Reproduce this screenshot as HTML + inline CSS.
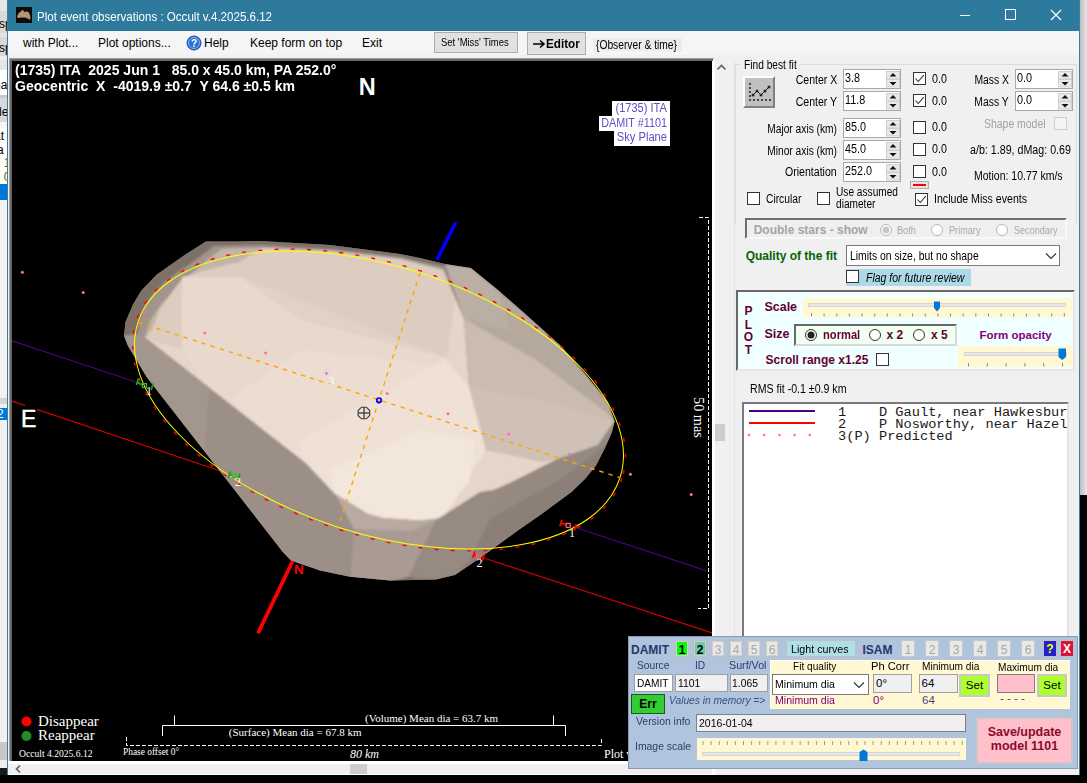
<!DOCTYPE html><html><head><meta charset="utf-8"><style>
html,body{margin:0;padding:0;width:1087px;height:783px;overflow:hidden;background:#000;position:relative;font-family:"Liberation Sans",sans-serif}
.t{position:absolute;white-space:pre;line-height:1}
.r{position:absolute;box-sizing:border-box}
svg{position:absolute;overflow:visible}
</style></head><body>
<div class="r" style="left:0px;top:0px;width:8px;height:775px;background:#f0f0f0;"></div>
<div class="r" style="left:0px;top:0px;width:7px;height:8px;background:#e8e8e8;"></div>
<div class="r" style="left:0px;top:8px;width:7px;height:3px;background:#dfe9df;"></div>
<div class="r" style="left:0px;top:11px;width:7px;height:22px;background:#d8d8d8;"></div>
<div class="r" style="left:0px;top:33px;width:7px;height:4px;background:#dfe9df;"></div>
<div class="r" style="left:0px;top:37px;width:7px;height:19px;background:#d8d8d8;"></div>
<div class="r" style="left:0px;top:56px;width:7px;height:4px;background:#eeeeee;"></div>
<div class="r" style="left:0px;top:60px;width:7px;height:10px;background:#e0eae0;"></div>
<div class="r" style="left:0px;top:70px;width:7px;height:25px;background:#ffffff;"></div>
<div class="r" style="left:0px;top:95px;width:7px;height:3px;background:#c8c8c8;"></div>
<div class="r" style="left:0px;top:98px;width:7px;height:24px;background:#d8d8d8;"></div>
<div class="r" style="left:0px;top:122px;width:7px;height:6px;background:#f4f4f4;"></div>
<div class="r" style="left:0px;top:128px;width:7px;height:56px;background:#ffffff;"></div>
<div class="r" style="left:0px;top:184px;width:7px;height:16px;background:#0078d7;"></div>
<div class="r" style="left:0px;top:200px;width:7px;height:198px;background:#f2f2f2;"></div>
<div class="r" style="left:0px;top:398px;width:7px;height:6px;background:#d4d4d4;"></div>
<div class="r" style="left:0px;top:404px;width:7px;height:4px;background:#f0f0f0;"></div>
<div class="r" style="left:0px;top:408px;width:7px;height:12px;background:#0078d7;"></div>
<div class="r" style="left:0px;top:420px;width:7px;height:322px;background:#f0f0f0;"></div>
<div class="r" style="left:0px;top:742px;width:7px;height:18px;background:#c8c8c8;"></div>
<div class="r" style="left:0px;top:760px;width:7px;height:8px;background:#efefef;"></div>
<div class="r" style="left:0px;top:768px;width:7px;height:7px;background:#1a1a1a;"></div>
<div style="position:absolute;left:0;top:0;width:7px;height:783px;overflow:hidden">
<div class="t" style="left:-1px;top:18px;font-size:12px;color:#000">sp</div>
<div class="t" style="left:-1px;top:42px;font-size:12px;color:#000">sp</div>
<div class="t" style="left:-6px;top:79px;font-size:12px;color:#000">na</div>
<div class="t" style="left:-5px;top:106px;font-size:12px;color:#000">de</div>
<div class="t" style="left:-6px;top:130px;font-size:12px;color:#000">at</div>
<div class="t" style="left:-3px;top:144px;font-size:12px;color:#000">a</div>
<div class="t" style="left:-3px;top:157px;font-size:12px;color:#7a5a00">. 1</div>
<div class="t" style="left:-3px;top:171px;font-size:12px;color:#7a5a00">. 0</div>
<div class="t" style="left:-3px;top:408px;font-size:12px;color:#fff">2</div>
</div>
<div class="r" style="left:7px;top:0px;width:1073px;height:775px;background:#f0f0f0;"></div>
<div class="r" style="left:7px;top:0px;width:1073px;height:31px;background:#2d7a9c;"></div>
<div class="r" style="left:1080px;top:0px;width:7px;height:495px;background:linear-gradient(to right,#bdbdbd,#e8e8e8);"></div>
<div class="r" style="left:1080px;top:495px;width:7px;height:288px;background:#000;"></div>
<div class="r" style="left:7px;top:0px;width:1px;height:775px;background:#3a7fa0;"></div>
<div class="r" style="left:1079px;top:0px;width:1px;height:775px;background:#3a7fa0;"></div>
<svg width="16" height="16" style="left:16px;top:7px"><rect width="16" height="16" fill="#0d0b08"/><path d="M1,10 C1.5,7 3.5,5 5.5,4 C6,3 6.5,2.8 7.2,3.2 C8,4.5 8.8,5.4 9.8,4.8 C11,4.2 12.5,4.8 13.5,7 C14.5,9 14.6,11.5 14,12.8 C12.5,12.5 11,11 9.5,10.8 C8,10.5 6,10.6 4,10.8 C2.5,11 1.5,11 1,10Z" fill="#b39470"/></svg>
<div class="t" style="left:37px;top:11.12px;font-size:12.5px;font-weight:400;color:#fff;font-family:'Liberation Sans';font-style:normal;letter-spacing:0px;transform:scaleX(0.925);transform-origin:0 0;">Plot event observations : Occult v.4.2025.6.12</div>
<svg width="100" height="20" style="left:955px;top:5px"><line x1="5" y1="10.5" x2="15" y2="10.5" stroke="#fff" stroke-width="1"/><rect x="50.5" y="4.5" width="10" height="10" fill="none" stroke="#fff" stroke-width="1"/><path d="M96,5 L106,15 M106,5 L96,15" stroke="#fff" stroke-width="1.2"/></svg>
<div class="r" style="left:8px;top:31px;width:1071px;height:24px;background:#f5f5f5;"></div>
<div class="t" style="left:23px;top:36.84px;font-size:12px;font-weight:400;color:#000;font-family:'Liberation Sans';font-style:normal;letter-spacing:0px;">with Plot...</div>
<div class="t" style="left:98px;top:36.84px;font-size:12px;font-weight:400;color:#000;font-family:'Liberation Sans';font-style:normal;letter-spacing:0px;">Plot options...</div>
<svg width="16" height="16" style="left:186px;top:35px"><circle cx="8" cy="8" r="7" fill="#2a6fd6" stroke="#1d4fa0" stroke-width="1"/><circle cx="8" cy="8" r="5.5" fill="none" stroke="#9cc4f5" stroke-width="0.8"/><text x="8" y="12" text-anchor="middle" font-family="Liberation Sans" font-weight="700" font-size="10" fill="#fff">?</text></svg>
<div class="t" style="left:204px;top:36.84px;font-size:12px;font-weight:400;color:#000;font-family:'Liberation Sans';font-style:normal;letter-spacing:0px;">Help</div>
<div class="t" style="left:250px;top:36.84px;font-size:12px;font-weight:400;color:#000;font-family:'Liberation Sans';font-style:normal;letter-spacing:0px;">Keep form on top</div>
<div class="t" style="left:362px;top:36.84px;font-size:12px;font-weight:400;color:#000;font-family:'Liberation Sans';font-style:normal;letter-spacing:0px;">Exit</div>
<div class="r" style="left:434px;top:32px;width:84px;height:21px;background:#e1e1e1;border:1px solid #adadad;"></div>
<div class="t" style="left:441px;top:37.19px;font-size:11px;font-weight:400;color:#000;font-family:'Liberation Sans';font-style:normal;letter-spacing:0px;transform:scaleX(0.86);transform-origin:0 0;">Set 'Miss' Times</div>
<div class="r" style="left:527px;top:32px;width:59px;height:23px;background:#e1e1e1;border:1px solid #adadad;"></div>
<svg width="14" height="10" style="left:532px;top:39px"><path d="M1,5 H12 M8,1.5 L12,5 L8,8.5" fill="none" stroke="#000" stroke-width="1.6"/></svg>
<div class="t" style="left:545.5px;top:37.00px;font-size:13px;font-weight:700;color:#000;font-family:'Liberation Sans';font-style:normal;letter-spacing:0px;transform:scaleX(0.9);transform-origin:0 0;">Editor</div>
<div class="r" style="left:593px;top:38px;width:89px;height:13px;background:#ececec;"></div>
<div class="t" style="left:596px;top:38.84px;font-size:12px;font-weight:400;color:#000;font-family:'Liberation Sans';font-style:normal;letter-spacing:0px;transform:scaleX(0.855);transform-origin:0 0;">{Observer &amp; time}</div>
<div class="r" style="left:9px;top:58px;width:706px;height:706px;background:#ffffff;"></div>
<div class="r" style="left:9px;top:58px;width:705px;height:1px;background:#a0a0a0;"></div>
<div class="r" style="left:9px;top:58px;width:1px;height:705px;background:#a0a0a0;"></div>
<div class="r" style="left:10px;top:59px;width:703px;height:2px;background:#696969;"></div>
<div class="r" style="left:10px;top:59px;width:2px;height:703px;background:#696969;"></div>
<div class="r" style="left:12px;top:61px;width:700px;height:700px;background:#000;"></div>
<svg width="1087" height="783" viewBox="0 0 1087 783" style="position:absolute;left:0;top:0"><defs><clipPath id="pc"><rect x="12" y="61" width="700" height="700"/></clipPath></defs><g clip-path="url(#pc)"><line x1="12" y1="340.8" x2="145" y2="385" stroke="#4b0082" stroke-width="1.2"/><line x1="568" y1="525" x2="706" y2="570.6" stroke="#4b0082" stroke-width="1.2"/><line x1="12" y1="401" x2="234" y2="475.5" stroke="#d00000" stroke-width="1.2"/><line x1="478" y1="556" x2="712" y2="633" stroke="#d00000" stroke-width="1.2"/><defs><clipPath id="ast"><polygon points="206,241.6 240,241.6 260,241 330,245 400,254 420,258 445,264 471,268 498,290 522,311 561,346 586,375 607.5,401.6 614.7,421 612,432 605,448 596,465.4 585,479 571.5,492 541,514.4 520,529 480,558 455,575 436,579.5 390,580.4 350,576.7 320,570.5 291,560.5 282.6,551.7 146.6,377 134,356 128,346 124,336 125.5,322 133,304.5 141,291 156.5,274.7 185,254.8"/></clipPath><filter id="bl" x="-5%" y="-5%" width="110%" height="110%"><feGaussianBlur stdDeviation="1.1"/></filter></defs><polygon points="206,241.6 240,241.6 260,241 330,245 400,254 420,258 445,264 471,268 498,290 522,311 561,346 586,375 607.5,401.6 614.7,421 612,432 605,448 596,465.4 585,479 571.5,492 541,514.4 520,529 480,558 455,575 436,579.5 390,580.4 350,576.7 320,570.5 291,560.5 282.6,551.7 146.6,377 134,356 128,346 124,336 125.5,322 133,304.5 141,291 156.5,274.7 185,254.8" fill="#7b6f67"/><g clip-path="url(#ast)"><g filter="url(#bl)"><polygon points="100,200 700,200 700,620 100,620" fill="#7b6f67"/><polygon points="214,246 262,245 330,249 400,257 445,267 464,319 470,400 300,470 146,380 137,338 139,322 145,306 153,294 168,279 194,261" fill="#a0948b"/><polygon points="222,249 262,248 330,251 400,259 443,270 464,319 469,387 486,450 542,460 598,445 480,496 442,518 420,520.6 383,518 368,514 335,494 305.8,470 216,400 145,338 150,322 160,306 175,290 190,275 205,262" fill="#e6d6c9"/><polygon points="222,249 262,248 240,262 200,272 184,277 172,292 160,310 152,330 145,338 150,322 160,306 175,290 190,275 205,262" fill="#c2b4a9"/><polygon points="240,262 262,248 330,251 400,259 443,270 455,300 447,358 240,277 184,277 200,272" fill="#ddcdc0"/><polygon points="240,277 447,358 300,320 240,290" fill="#e2d2c5"/><polygon points="184,277 182,350 145,338 152,330 160,310 172,292" fill="#ddcdc0"/><polygon points="182,277 240,277 300,320 447,358 469,387 486,450 442,518 420,520.6 383,518 368,514 335,494 305.8,470 216,400 182,350" fill="#e9d9cc"/><polygon points="230,400 300,350 447,365 469,387 486,450 442,518 420,520.6 383,518 368,514 335,494 305.8,470" fill="#ecddd0"/><polygon points="300,440 444,359 469,387 486,450 442,518 420,520.6 383,518 368,514 335,494 305.8,470" fill="#efe1d5"/><polygon points="330,470 420,430 475,440 470,480 442,518 420,520.6 383,518 368,514 335,494" fill="#f3e6da"/><polygon points="445,264 471,268 498,290 522,311 561,346 586,375 607.5,401.6 614.7,421 605,411.3 537,360.4 464.3,319" fill="#b5a89d"/><polygon points="445,264 471,268 498,290 510,330 464.3,319" fill="#bbaea3"/><polygon points="464.3,319 537,360.4 605,411.3 614.7,421 612,432 598,445 557,459.3 542,462 486,450 469,387" fill="#cfc1b5"/><polygon points="464.3,319 537,360.4 605,411.3 614.7,421 540,400 469,387" fill="#cabcb0"/><polygon points="614.7,421 640,440 620,480 560,540 520,560 480,570 455,585 436,590 408.8,576.7 436.4,519.7 480,496 500,488 557,459.3 598,445" fill="#8b7f77"/><polygon points="436.4,519.7 480,496 500,488 557,459.3 598,445 614.7,421 620,435 560,480 470,530" fill="#958980"/><polygon points="436.4,519.7 480,492 505,488 470,560 455,575 436,579.5 408.8,576.7" fill="#968a81"/><polygon points="335,494 368,514 383,518 420,520.6 442,518 436.4,519.7 408.8,576.7 390,582 350,580 353.6,528.9" fill="#a99b92"/><polygon points="353.6,528.9 335,494 368,514 383,518 420,520.6 442,518 436.4,519.7 412.5,530.7" fill="#b8aaa0"/><polygon points="110,336 124,336 140,333.5 305.8,463 335,494 353.6,528.9 350,590 280,570 140,380" fill="#9c8f87"/><polygon points="124,336 140,333.5 209,387.5 204,458 146.6,377 134,356" fill="#a3968d"/></g></g><g transform="translate(379,400) rotate(17.86)"><ellipse cx="0" cy="0" rx="255.2" ry="135.6" fill="none" stroke="#ff0000" stroke-width="1.35" stroke-dasharray="4,12.2"/><ellipse cx="0" cy="0" rx="253.2" ry="133.6" fill="none" stroke="#ffff00" stroke-width="1.0"/><line x1="-253" y1="0" x2="253" y2="0" stroke="#ffa500" stroke-width="1.4" stroke-dasharray="4.5,5"/><line x1="0" y1="-133.6" x2="0" y2="133.6" stroke="#ffa500" stroke-width="1.4" stroke-dasharray="4.5,5"/></g><circle cx="22.4" cy="272.3" r="1.5" fill="#ff69b4"/><circle cx="83.2" cy="292.5" r="1.5" fill="#ff69b4"/><circle cx="144.0" cy="312.7" r="1.5" fill="#ff69b4"/><circle cx="204.8" cy="332.9" r="1.5" fill="#ff69b4"/><circle cx="265.6" cy="353.1" r="1.5" fill="#ff69b4"/><circle cx="326.4" cy="373.3" r="1.5" fill="#ff69b4"/><circle cx="387.2" cy="393.5" r="1.5" fill="#ff69b4"/><circle cx="448.0" cy="413.7" r="1.5" fill="#ff69b4"/><circle cx="508.8" cy="433.9" r="1.5" fill="#ff69b4"/><circle cx="569.6" cy="454.1" r="1.5" fill="#ff69b4"/><circle cx="630.4" cy="474.3" r="1.5" fill="#ff69b4"/><circle cx="691.2" cy="494.5" r="1.5" fill="#ff69b4"/><line x1="437" y1="259.8" x2="455.8" y2="222.5" stroke="#0000ff" stroke-width="3.6"/><line x1="258" y1="633.3" x2="292.6" y2="561.3" stroke="#ff0000" stroke-width="3.8"/><text x="294" y="574" font-family="Liberation Sans" font-weight="700" font-size="13.5" fill="#ff0000">N</text><circle cx="379" cy="400.3" r="2.3" fill="none" stroke="#0000ff" stroke-width="1.7"/><polygon points="366.3,407.2 369.7,410.6 369.7,415.4 366.3,418.8 361.5,418.8 358.1,415.4 358.1,410.6 361.5,407.2" fill="none" stroke="#3a3a3a" stroke-width="1.1"/><line x1="358" y1="413" x2="370" y2="413" stroke="#3a3a3a" stroke-width="1.3"/><line x1="364" y1="407" x2="364" y2="419" stroke="#3a3a3a" stroke-width="1.3"/><g stroke="#1fa01f" stroke-width="1.8" fill="none"><line x1="137.4" y1="382.1" x2="142.5" y2="385.1"/><line x1="138.4" y1="378.6" x2="136.4" y2="385.1"/><line x1="153.2" y1="383.5" x2="151.2" y2="390"/></g><rect x="142.5" y="383.6" width="4" height="4" fill="none" stroke="#30c030" stroke-width="1.2"/><g stroke="#1fa01f" stroke-width="1.8" fill="none"><line x1="229.3" y1="474.7" x2="232.4" y2="475.4"/><line x1="230.3" y1="471.2" x2="228.3" y2="477.7"/><line x1="240" y1="473.5" x2="238" y2="480"/></g><rect x="232.4" y="473.9" width="4" height="4" fill="none" stroke="#30c030" stroke-width="1.2"/><g stroke="#ff0000" stroke-width="1.8" fill="none"><line x1="561" y1="523.2" x2="566.2" y2="524.9"/><line x1="562" y1="519.7" x2="560" y2="526.2"/><line x1="576.4" y1="524.1" x2="574.4" y2="530.6"/></g><rect x="566.2" y="523.4" width="4" height="4" fill="none" stroke="#ff6060" stroke-width="1.2"/><g stroke="#ff0000" stroke-width="1.8" fill="none"><line x1="473.8" y1="554.8" x2="476.5" y2="555.8"/><line x1="474.8" y1="551.3" x2="472.8" y2="557.8"/><line x1="484.2" y1="554.5" x2="482.2" y2="561"/></g><rect x="476.5" y="554.3" width="4" height="4" fill="none" stroke="#ff6060" stroke-width="1.2"/><g stroke="#d8d0f0" stroke-width="0.9"><line x1="328.10" y1="373.40" x2="331.20" y2="373.40"/><line x1="327.66" y1="374.46" x2="329.85" y2="376.65"/><line x1="326.60" y1="374.90" x2="326.60" y2="378.00"/><line x1="325.54" y1="374.46" x2="323.35" y2="376.65"/><line x1="325.10" y1="373.40" x2="322.00" y2="373.40"/><line x1="325.54" y1="372.34" x2="323.35" y2="370.15"/><line x1="326.60" y1="371.90" x2="326.60" y2="368.80"/><line x1="327.66" y1="372.34" x2="329.85" y2="370.15"/></g><text x="146" y="395" font-family="Liberation Serif" font-size="12" fill="#ffffff">1</text><text x="235" y="486.2" font-family="Liberation Serif" font-size="12" fill="#ffffff">2</text><text x="569" y="536.8" font-family="Liberation Serif" font-size="12" fill="#ffffff">1</text><text x="476.5" y="567.3" font-family="Liberation Serif" font-size="12" fill="#ffffff">2</text><text x="328.3" y="384.9" font-family="Liberation Serif" font-size="12" fill="#ffffff">3</text><path d="M699,217.5 H708.5 V608.5 H698" fill="none" stroke="#fff" stroke-width="1" stroke-dasharray="4,2"/><text transform="translate(693.5,397) rotate(90)" font-family="Liberation Serif" font-size="14.3" fill="#fff">50 mas</text><circle cx="26.5" cy="721.5" r="5" fill="#ff0000"/><circle cx="26.5" cy="736" r="5" fill="#228b22"/><path d="M174.5,715.5 V725.5 M553.5,715.5 V725.5" fill="none" stroke="#fff" stroke-width="1"/><path d="M162.5,736 V725.5 H565.5 V736" fill="none" stroke="#fff" stroke-width="1"/><path d="M126.5,737 V745.5 H601.5 V737" fill="none" stroke="#fff" stroke-width="1" stroke-dasharray="4,2"/></g></svg>
<div class="t" style="left:15px;top:62.30px;font-size:15px;font-weight:700;color:#fff;font-family:'Liberation Sans';font-style:normal;letter-spacing:0px;transform:scaleX(0.935);transform-origin:0 0;">(1735) ITA  2025 Jun 1   85.0 x 45.0 km, PA 252.0°</div>
<div class="t" style="left:15px;top:77.80px;font-size:15px;font-weight:700;color:#fff;font-family:'Liberation Sans';font-style:normal;letter-spacing:0px;transform:scaleX(0.935);transform-origin:0 0;">Geocentric  X  -4019.9 ±0.7  Y 64.6 ±0.5 km</div>
<div class="t" style="left:358.7px;top:76.11px;font-size:23.5px;font-weight:700;color:#fff;font-family:'Liberation Sans';font-style:normal;letter-spacing:0px;">N</div>
<div class="r" style="left:25px;top:402px;width:11.5px;height:26px;background:#000;"></div>
<div class="t" style="left:21px;top:407.53px;font-size:23px;font-weight:400;color:#fff;font-family:'Liberation Sans';font-style:normal;letter-spacing:0px;-webkit-text-stroke:0.5px #fff;">E</div>
<div class="r" style="left:612px;top:101px;width:58px;height:15px;background:#fff;"></div>
<div class="r" style="left:599px;top:116px;width:71px;height:15px;background:#fff;"></div>
<div class="r" style="left:614px;top:131px;width:56px;height:15px;background:#fff;"></div>
<div class="t" style="right:420px;top:102.34px;font-size:12px;font-weight:400;color:#5a50c8;font-family:'Liberation Sans';font-style:normal;letter-spacing:0px;transform:scaleX(0.92);transform-origin:100% 0;">(1735) ITA</div>
<div class="t" style="right:420px;top:117.24px;font-size:12px;font-weight:400;color:#5a50c8;font-family:'Liberation Sans';font-style:normal;letter-spacing:0px;transform:scaleX(0.9);transform-origin:100% 0;">DAMIT #1101</div>
<div class="t" style="right:419.5px;top:130.84px;font-size:12px;font-weight:400;color:#5a50c8;font-family:'Liberation Sans';font-style:normal;letter-spacing:0px;transform:scaleX(0.93);transform-origin:100% 0;">Sky Plane</div>
<div class="t" style="left:38px;top:714.44px;font-size:15px;font-weight:400;color:#fff;font-family:'Liberation Serif';font-style:normal;letter-spacing:0px;">Disappear</div>
<div class="t" style="left:38px;top:728.44px;font-size:15px;font-weight:400;color:#fff;font-family:'Liberation Serif';font-style:normal;letter-spacing:0px;">Reappear</div>
<div class="t" style="left:19px;top:748.96px;font-size:9.6px;font-weight:400;color:#fff;font-family:'Liberation Serif';font-style:normal;letter-spacing:0px;">Occult 4.2025.6.12</div>
<div class="t" style="left:123px;top:748.43px;font-size:9.4px;font-weight:400;color:#fff;font-family:'Liberation Serif';font-style:normal;letter-spacing:0px;">Phase offset 0°</div>
<div class="t" style="left:350px;top:747.95px;font-size:12px;font-weight:400;color:#fff;font-family:'Liberation Serif';font-style:italic;letter-spacing:0px;">80 km</div>
<div class="t" style="left:604px;top:747.95px;font-size:12px;font-weight:400;color:#fff;font-family:'Liberation Serif';font-style:normal;letter-spacing:0px;">Plot v</div>
<div class="t" style="left:365px;top:713.29px;font-size:11px;font-weight:400;color:#fff;font-family:'Liberation Serif';font-style:normal;letter-spacing:0px;">(Volume) Mean dia = 63.7 km</div>
<div class="t" style="left:228.8px;top:726.59px;font-size:11px;font-weight:400;color:#fff;font-family:'Liberation Serif';font-style:normal;letter-spacing:0px;">(Surface) Mean dia = 67.8 km</div>
<div class="r" style="left:8px;top:761px;width:707px;height:14px;background:#ffffff;"></div>
<div class="r" style="left:8px;top:764px;width:704px;height:10px;background:#f0f0f0;"></div>
<div class="r" style="left:350px;top:764px;width:17px;height:10px;background:#cdcdcd;"></div>
<svg width="10" height="10" style="left:14px;top:764px"><path d="M6,1.5 L2.5,5 L6,8.5" fill="none" stroke="#606060" stroke-width="1.6"/></svg>
<div class="r" style="left:715px;top:60px;width:19px;height:700px;background:#f0f0f0;"></div>
<div class="r" style="left:715px;top:424px;width:10px;height:17px;background:#cdcdcd;"></div>
<svg width="12" height="10" style="left:715.5px;top:62px"><path d="M1.5,7.5 L5.5,3.5 L9.5,7.5" fill="none" stroke="#606060" stroke-width="1.6"/></svg>
<div class="r" style="left:734px;top:60px;width:1px;height:700px;background:#e3e3e3;"></div>
<div class="r" style="left:735px;top:64px;width:342px;height:160px;background:none;border:1px solid #dcdcdc;border-bottom:none;"></div>
<div class="r" style="left:741px;top:58px;width:58px;height:12px;background:#f0f0f0;"></div>
<div class="t" style="left:743.5px;top:58.84px;font-size:12px;font-weight:400;color:#000;font-family:'Liberation Sans';font-style:normal;letter-spacing:0px;transform:scaleX(0.85);transform-origin:0 0;">Find best fit</div>
<div class="r" style="left:743px;top:76px;width:32px;height:32px;background:#c0c0c0;border:2px solid;border-color:#fff #808080 #808080 #fff;"></div>
<svg width="32" height="32" style="left:743px;top:76px"><g fill="#222"><circle cx="7" cy="24" r="1"/><circle cx="11" cy="24" r="1"/><circle cx="15" cy="24" r="1"/><circle cx="19" cy="24" r="1"/><circle cx="23" cy="24" r="1"/><circle cx="27" cy="24" r="1"/><circle cx="7" cy="8" r="1"/><circle cx="7" cy="12" r="1"/><circle cx="7" cy="16" r="1"/><circle cx="7" cy="20" r="1"/><circle cx="10" cy="19" r="1.5"/><circle cx="14" cy="15" r="1.5"/><circle cx="18" cy="19" r="1.5"/><circle cx="22" cy="15" r="1.5"/><circle cx="26" cy="11" r="1.5"/></g><path d="M10,19 L14,15 L18,19 L22,15 L26,11" fill="none" stroke="#222" stroke-width="1"/></svg>
<div class="t" style="right:250px;top:74.04px;font-size:12px;font-weight:400;color:#000;font-family:'Liberation Sans';font-style:normal;letter-spacing:0px;transform:scaleX(0.88);transform-origin:100% 0;">Center X</div>
<div class="r" style="left:843px;top:69px;width:58px;height:20px;background:#fff;border:1px solid #a8a8a8;"></div>
<div class="t" style="left:845px;top:71.84px;font-size:12px;font-weight:400;color:#000;font-family:'Liberation Sans';font-style:normal;letter-spacing:0px;transform:scaleX(0.9);transform-origin:0 0;">3.8</div>
<svg width="16" height="20" style="left:885px;top:69px"><rect x="1.5" y="2.5" width="13" height="7.5" fill="#e9e9e9" stroke="#cfcfcf"/><rect x="1.5" y="10.5" width="13" height="7.5" fill="#e9e9e9" stroke="#cfcfcf"/><path d="M4.5,7.5 L8,4.0 L11.5,7.5Z M4.5,13.0 L8,16.5 L11.5,13.0Z" fill="#111"/></svg>
<div class="t" style="right:250px;top:95.84px;font-size:12px;font-weight:400;color:#000;font-family:'Liberation Sans';font-style:normal;letter-spacing:0px;transform:scaleX(0.88);transform-origin:100% 0;">Center Y</div>
<div class="r" style="left:843px;top:91px;width:58px;height:20px;background:#fff;border:1px solid #a8a8a8;"></div>
<div class="t" style="left:845px;top:93.84px;font-size:12px;font-weight:400;color:#000;font-family:'Liberation Sans';font-style:normal;letter-spacing:0px;transform:scaleX(0.9);transform-origin:0 0;">11.8</div>
<svg width="16" height="20" style="left:885px;top:91px"><rect x="1.5" y="2.5" width="13" height="7.5" fill="#e9e9e9" stroke="#cfcfcf"/><rect x="1.5" y="10.5" width="13" height="7.5" fill="#e9e9e9" stroke="#cfcfcf"/><path d="M4.5,7.5 L8,4.0 L11.5,7.5Z M4.5,13.0 L8,16.5 L11.5,13.0Z" fill="#111"/></svg>
<div class="t" style="right:250px;top:123.14px;font-size:12px;font-weight:400;color:#000;font-family:'Liberation Sans';font-style:normal;letter-spacing:0px;transform:scaleX(0.851);transform-origin:100% 0;">Major axis (km)</div>
<div class="r" style="left:843px;top:118px;width:58px;height:20px;background:#fff;border:1px solid #a8a8a8;"></div>
<div class="t" style="left:845px;top:120.84px;font-size:12px;font-weight:400;color:#000;font-family:'Liberation Sans';font-style:normal;letter-spacing:0px;transform:scaleX(0.9);transform-origin:0 0;">85.0</div>
<svg width="16" height="20" style="left:885px;top:118px"><rect x="1.5" y="2.5" width="13" height="7.5" fill="#e9e9e9" stroke="#cfcfcf"/><rect x="1.5" y="10.5" width="13" height="7.5" fill="#e9e9e9" stroke="#cfcfcf"/><path d="M4.5,7.5 L8,4.0 L11.5,7.5Z M4.5,13.0 L8,16.5 L11.5,13.0Z" fill="#111"/></svg>
<div class="t" style="right:250px;top:144.84px;font-size:12px;font-weight:400;color:#000;font-family:'Liberation Sans';font-style:normal;letter-spacing:0px;transform:scaleX(0.851);transform-origin:100% 0;">Minor axis (km)</div>
<div class="r" style="left:843px;top:140px;width:58px;height:20px;background:#fff;border:1px solid #a8a8a8;"></div>
<div class="t" style="left:845px;top:142.84px;font-size:12px;font-weight:400;color:#000;font-family:'Liberation Sans';font-style:normal;letter-spacing:0px;transform:scaleX(0.9);transform-origin:0 0;">45.0</div>
<svg width="16" height="20" style="left:885px;top:140px"><rect x="1.5" y="2.5" width="13" height="7.5" fill="#e9e9e9" stroke="#cfcfcf"/><rect x="1.5" y="10.5" width="13" height="7.5" fill="#e9e9e9" stroke="#cfcfcf"/><path d="M4.5,7.5 L8,4.0 L11.5,7.5Z M4.5,13.0 L8,16.5 L11.5,13.0Z" fill="#111"/></svg>
<div class="t" style="right:250px;top:165.84px;font-size:12px;font-weight:400;color:#000;font-family:'Liberation Sans';font-style:normal;letter-spacing:0px;transform:scaleX(0.88);transform-origin:100% 0;">Orientation</div>
<div class="r" style="left:843px;top:162px;width:58px;height:20px;background:#fff;border:1px solid #a8a8a8;"></div>
<div class="t" style="left:845px;top:164.84px;font-size:12px;font-weight:400;color:#000;font-family:'Liberation Sans';font-style:normal;letter-spacing:0px;transform:scaleX(0.9);transform-origin:0 0;">252.0</div>
<svg width="16" height="20" style="left:885px;top:162px"><rect x="1.5" y="2.5" width="13" height="7.5" fill="#e9e9e9" stroke="#cfcfcf"/><rect x="1.5" y="10.5" width="13" height="7.5" fill="#e9e9e9" stroke="#cfcfcf"/><path d="M4.5,7.5 L8,4.0 L11.5,7.5Z M4.5,13.0 L8,16.5 L11.5,13.0Z" fill="#111"/></svg>
<div class="r" style="left:913px;top:72px;width:13px;height:13px;background:#fff;border:1px solid #333;"></div>
<svg width="13" height="13" style="left:913px;top:72px"><path d="M2.5,6.5 L5.2,9.5 L10.8,3.2" fill="none" stroke="#333" stroke-width="1.1"/></svg>
<div class="t" style="left:932px;top:73.24px;font-size:12px;font-weight:400;color:#000;font-family:'Liberation Sans';font-style:normal;letter-spacing:0px;transform:scaleX(0.89);transform-origin:0 0;">0.0</div>
<div class="r" style="left:913px;top:94px;width:13px;height:13px;background:#fff;border:1px solid #333;"></div>
<svg width="13" height="13" style="left:913px;top:94px"><path d="M2.5,6.5 L5.2,9.5 L10.8,3.2" fill="none" stroke="#333" stroke-width="1.1"/></svg>
<div class="t" style="left:932px;top:94.84px;font-size:12px;font-weight:400;color:#000;font-family:'Liberation Sans';font-style:normal;letter-spacing:0px;transform:scaleX(0.89);transform-origin:0 0;">0.0</div>
<div class="r" style="left:913px;top:121px;width:13px;height:13px;background:#fff;border:1px solid #333;"></div>
<div class="t" style="left:932px;top:121.44px;font-size:12px;font-weight:400;color:#000;font-family:'Liberation Sans';font-style:normal;letter-spacing:0px;transform:scaleX(0.89);transform-origin:0 0;">0.0</div>
<div class="r" style="left:913px;top:143px;width:13px;height:13px;background:#fff;border:1px solid #333;"></div>
<div class="t" style="left:932px;top:143.24px;font-size:12px;font-weight:400;color:#000;font-family:'Liberation Sans';font-style:normal;letter-spacing:0px;transform:scaleX(0.89);transform-origin:0 0;">0.0</div>
<div class="r" style="left:913px;top:165px;width:13px;height:13px;background:#fff;border:1px solid #333;"></div>
<div class="t" style="left:932px;top:165.64px;font-size:12px;font-weight:400;color:#000;font-family:'Liberation Sans';font-style:normal;letter-spacing:0px;transform:scaleX(0.89);transform-origin:0 0;">0.0</div>
<div class="r" style="left:910px;top:181px;width:19px;height:8px;background:#e6e6e6;border:1px solid #b0b0b0;"></div>
<div class="r" style="left:913px;top:184px;width:13px;height:2px;background:#ff0000;"></div>
<div class="t" style="right:78px;top:73.94px;font-size:12px;font-weight:400;color:#000;font-family:'Liberation Sans';font-style:normal;letter-spacing:0px;transform:scaleX(0.865);transform-origin:100% 0;">Mass X</div>
<div class="t" style="right:78px;top:95.84px;font-size:12px;font-weight:400;color:#000;font-family:'Liberation Sans';font-style:normal;letter-spacing:0px;transform:scaleX(0.865);transform-origin:100% 0;">Mass Y</div>
<div class="r" style="left:1015px;top:69px;width:58px;height:20px;background:#fff;border:1px solid #a8a8a8;"></div>
<div class="t" style="left:1017px;top:71.84px;font-size:12px;font-weight:400;color:#000;font-family:'Liberation Sans';font-style:normal;letter-spacing:0px;transform:scaleX(0.9);transform-origin:0 0;">0.0</div>
<svg width="16" height="20" style="left:1057px;top:69px"><rect x="1.5" y="2.5" width="13" height="7.5" fill="#e9e9e9" stroke="#cfcfcf"/><rect x="1.5" y="10.5" width="13" height="7.5" fill="#e9e9e9" stroke="#cfcfcf"/><path d="M4.5,7.5 L8,4.0 L11.5,7.5Z M4.5,13.0 L8,16.5 L11.5,13.0Z" fill="#111"/></svg>
<div class="r" style="left:1015px;top:91px;width:58px;height:20px;background:#fff;border:1px solid #a8a8a8;"></div>
<div class="t" style="left:1017px;top:93.84px;font-size:12px;font-weight:400;color:#000;font-family:'Liberation Sans';font-style:normal;letter-spacing:0px;transform:scaleX(0.9);transform-origin:0 0;">0.0</div>
<svg width="16" height="20" style="left:1057px;top:91px"><rect x="1.5" y="2.5" width="13" height="7.5" fill="#e9e9e9" stroke="#cfcfcf"/><rect x="1.5" y="10.5" width="13" height="7.5" fill="#e9e9e9" stroke="#cfcfcf"/><path d="M4.5,7.5 L8,4.0 L11.5,7.5Z M4.5,13.0 L8,16.5 L11.5,13.0Z" fill="#111"/></svg>
<div class="t" style="left:984px;top:118.14px;font-size:12px;font-weight:400;color:#a0a0a0;font-family:'Liberation Sans';font-style:normal;letter-spacing:0px;transform:scaleX(0.87);transform-origin:0 0;">Shape model</div>
<div class="r" style="left:1054px;top:117px;width:13px;height:13px;background:#f4f4f4;border:1px solid #cfcfcf;"></div>
<div class="t" style="left:970.3px;top:144.44px;font-size:12px;font-weight:400;color:#000;font-family:'Liberation Sans';font-style:normal;letter-spacing:0px;transform:scaleX(0.89);transform-origin:0 0;">a/b: 1.89, dMag: 0.69</div>
<div class="t" style="left:974.2px;top:169.54px;font-size:12px;font-weight:400;color:#000;font-family:'Liberation Sans';font-style:normal;letter-spacing:0px;transform:scaleX(0.874);transform-origin:0 0;">Motion: 10.77 km/s</div>
<div class="r" style="left:747px;top:192px;width:13px;height:13px;background:#fff;border:1px solid #333;"></div>
<div class="t" style="left:765.6px;top:192.84px;font-size:12px;font-weight:400;color:#000;font-family:'Liberation Sans';font-style:normal;letter-spacing:0px;transform:scaleX(0.855);transform-origin:0 0;">Circular</div>
<div class="r" style="left:817px;top:192px;width:13px;height:13px;background:#fff;border:1px solid #333;"></div>
<div class="t" style="left:836.3px;top:186.44px;font-size:12px;font-weight:400;color:#000;font-family:'Liberation Sans';font-style:normal;letter-spacing:0px;transform:scaleX(0.845);transform-origin:0 0;">Use assumed</div>
<div class="t" style="left:836.3px;top:198.34px;font-size:12px;font-weight:400;color:#000;font-family:'Liberation Sans';font-style:normal;letter-spacing:0px;transform:scaleX(0.845);transform-origin:0 0;">diameter</div>
<div class="r" style="left:915px;top:192.5px;width:13px;height:13px;background:#fff;border:1px solid #333;"></div>
<svg width="13" height="13" style="left:915px;top:192.5px"><path d="M2.5,6.5 L5.2,9.5 L10.8,3.2" fill="none" stroke="#333" stroke-width="1.1"/></svg>
<div class="t" style="left:934.2px;top:192.84px;font-size:12px;font-weight:400;color:#000;font-family:'Liberation Sans';font-style:normal;letter-spacing:0px;transform:scaleX(0.883);transform-origin:0 0;">Include Miss events</div>
<div class="r" style="left:745px;top:218px;width:322px;height:21px;background:#efefef;border:2px solid;border-color:#6e6e6e #f8f8f8 #f8f8f8 #6e6e6e;"></div>
<div class="t" style="left:753.7px;top:223.64px;font-size:12px;font-weight:700;color:#a5a5a5;font-family:'Liberation Sans';font-style:normal;letter-spacing:0px;">Double stars - show</div>
<svg width="14" height="14" style="left:879px;top:222.5px"><circle cx="7" cy="7" r="5.5" fill="#fff" stroke="#b8b8b8" stroke-width="1"/><circle cx="7" cy="7" r="3.5" fill="#c8c8c8"/></svg>
<div class="t" style="left:897px;top:225.11px;font-size:10.5px;font-weight:400;color:#a8a8a8;font-family:'Liberation Sans';font-style:normal;letter-spacing:0px;transform:scaleX(0.87);transform-origin:0 0;">Both</div>
<svg width="14" height="14" style="left:930px;top:222.5px"><circle cx="7" cy="7" r="5.5" fill="#fff" stroke="#b8b8b8" stroke-width="1"/></svg>
<div class="t" style="left:949px;top:225.11px;font-size:10.5px;font-weight:400;color:#a8a8a8;font-family:'Liberation Sans';font-style:normal;letter-spacing:0px;transform:scaleX(0.87);transform-origin:0 0;">Primary</div>
<svg width="14" height="14" style="left:995px;top:222.5px"><circle cx="7" cy="7" r="5.5" fill="#fff" stroke="#b8b8b8" stroke-width="1"/></svg>
<div class="t" style="left:1014px;top:225.11px;font-size:10.5px;font-weight:400;color:#a8a8a8;font-family:'Liberation Sans';font-style:normal;letter-spacing:0px;transform:scaleX(0.866);transform-origin:0 0;">Secondary</div>
<div class="t" style="left:745.7px;top:250.34px;font-size:12px;font-weight:700;color:#006400;font-family:'Liberation Sans';font-style:normal;letter-spacing:0px;">Quality of the fit</div>
<div class="r" style="left:846px;top:245px;width:214px;height:21px;background:#fff;border:1px solid #7a7a7a;"></div>
<div class="t" style="left:849.6px;top:249.84px;font-size:12px;font-weight:400;color:#000;font-family:'Liberation Sans';font-style:normal;letter-spacing:0px;transform:scaleX(0.865);transform-origin:0 0;">Limits on size, but no shape</div>
<svg width="12" height="8" style="left:1045px;top:252px"><path d="M1,1.5 L6,6.5 L11,1.5" fill="none" stroke="#333" stroke-width="1.2"/></svg>
<div class="r" style="left:846px;top:269px;width:125px;height:17px;background:#add8e6;"></div>
<div class="r" style="left:846px;top:270px;width:13px;height:13px;background:#fff;border:1px solid #333;"></div>
<div class="t" style="left:866px;top:271.84px;font-size:12px;font-weight:400;color:#000;font-family:'Liberation Sans';font-style:italic;letter-spacing:0px;transform:scaleX(0.873);transform-origin:0 0;">Flag for future review</div>
<div class="r" style="left:736px;top:290px;width:339px;height:81px;background:#f0ffff;border:2px solid;border-color:#696969 #e6e6e6 #e6e6e6 #696969;"></div>
<div class="t" style="left:748.5px;top:305.44px;font-size:12px;font-weight:700;color:#660033;font-family:'Liberation Sans';font-style:normal;letter-spacing:0px;transform:translateX(-50%);">P</div>
<div class="t" style="left:748.5px;top:318.74px;font-size:12px;font-weight:700;color:#660033;font-family:'Liberation Sans';font-style:normal;letter-spacing:0px;transform:translateX(-50%);">L</div>
<div class="t" style="left:748.5px;top:331.14px;font-size:12px;font-weight:700;color:#660033;font-family:'Liberation Sans';font-style:normal;letter-spacing:0px;transform:translateX(-50%);">O</div>
<div class="t" style="left:748.5px;top:344.34px;font-size:12px;font-weight:700;color:#660033;font-family:'Liberation Sans';font-style:normal;letter-spacing:0px;transform:translateX(-50%);">T</div>
<div class="t" style="left:764.4px;top:301.42px;font-size:12.5px;font-weight:700;color:#660033;font-family:'Liberation Sans';font-style:normal;letter-spacing:0px;">Scale</div>
<div class="r" style="left:803px;top:298px;width:269px;height:19px;background:#fff8d2;"></div>
<div class="r" style="left:808px;top:303px;width:258px;height:4px;background:#e7e7e7;border:1px solid #d6d6d6;"></div>
<svg width="8" height="12" style="left:934px;top:300.5px"><path d="M0,0.5 H6 V7 L3,10.5 L0,7Z" fill="#0078d7"/></svg>
<svg width="1087" height="6" style="left:0px;top:313px"><line x1="811.5" y1="0" x2="811.5" y2="3.5" stroke="#8a8a8a" stroke-width="1"/><line x1="824.1" y1="0.5" x2="824.1" y2="3.5" stroke="#8a8a8a" stroke-width="1"/><line x1="836.8" y1="0.5" x2="836.8" y2="3.5" stroke="#8a8a8a" stroke-width="1"/><line x1="849.4" y1="0.5" x2="849.4" y2="3.5" stroke="#8a8a8a" stroke-width="1"/><line x1="862.1" y1="0.5" x2="862.1" y2="3.5" stroke="#8a8a8a" stroke-width="1"/><line x1="874.7" y1="0.5" x2="874.7" y2="3.5" stroke="#8a8a8a" stroke-width="1"/><line x1="887.3" y1="0.5" x2="887.3" y2="3.5" stroke="#8a8a8a" stroke-width="1"/><line x1="900.0" y1="0.5" x2="900.0" y2="3.5" stroke="#8a8a8a" stroke-width="1"/><line x1="912.6" y1="0.5" x2="912.6" y2="3.5" stroke="#8a8a8a" stroke-width="1"/><line x1="925.3" y1="0.5" x2="925.3" y2="3.5" stroke="#8a8a8a" stroke-width="1"/><line x1="937.9" y1="0.5" x2="937.9" y2="3.5" stroke="#8a8a8a" stroke-width="1"/><line x1="950.5" y1="0.5" x2="950.5" y2="3.5" stroke="#8a8a8a" stroke-width="1"/><line x1="963.2" y1="0.5" x2="963.2" y2="3.5" stroke="#8a8a8a" stroke-width="1"/><line x1="975.8" y1="0.5" x2="975.8" y2="3.5" stroke="#8a8a8a" stroke-width="1"/><line x1="988.5" y1="0.5" x2="988.5" y2="3.5" stroke="#8a8a8a" stroke-width="1"/><line x1="1001.1" y1="0.5" x2="1001.1" y2="3.5" stroke="#8a8a8a" stroke-width="1"/><line x1="1013.7" y1="0.5" x2="1013.7" y2="3.5" stroke="#8a8a8a" stroke-width="1"/><line x1="1026.4" y1="0.5" x2="1026.4" y2="3.5" stroke="#8a8a8a" stroke-width="1"/><line x1="1039.0" y1="0.5" x2="1039.0" y2="3.5" stroke="#8a8a8a" stroke-width="1"/><line x1="1051.7" y1="0.5" x2="1051.7" y2="3.5" stroke="#8a8a8a" stroke-width="1"/><line x1="1064.3" y1="0" x2="1064.3" y2="3.5" stroke="#8a8a8a" stroke-width="1"/></svg>
<div class="t" style="left:764.4px;top:327.72px;font-size:12.5px;font-weight:700;color:#660033;font-family:'Liberation Sans';font-style:normal;letter-spacing:0px;">Size</div>
<div class="r" style="left:794px;top:324px;width:163px;height:22px;background:#f0fff0;border:2px solid;border-color:#696969 #d8d8d8 #d8d8d8 #696969;"></div>
<svg width="14" height="14" style="left:803.5px;top:327.5px"><circle cx="7" cy="7" r="5.5" fill="#fff" stroke="#333" stroke-width="1"/><circle cx="7" cy="7" r="3.5" fill="#222"/></svg>
<div class="t" style="left:822.7px;top:328.84px;font-size:12px;font-weight:700;color:#660033;font-family:'Liberation Sans';font-style:normal;letter-spacing:0px;transform:scaleX(0.93);transform-origin:0 0;">normal</div>
<svg width="14" height="14" style="left:867.5px;top:327.5px"><circle cx="7" cy="7" r="5.5" fill="#fff" stroke="#333" stroke-width="1"/></svg>
<div class="t" style="left:886.5px;top:328.84px;font-size:12px;font-weight:700;color:#660033;font-family:'Liberation Sans';font-style:normal;letter-spacing:0px;">x 2</div>
<svg width="14" height="14" style="left:911.5px;top:327.5px"><circle cx="7" cy="7" r="5.5" fill="#fff" stroke="#333" stroke-width="1"/></svg>
<div class="t" style="left:931px;top:328.84px;font-size:12px;font-weight:700;color:#660033;font-family:'Liberation Sans';font-style:normal;letter-spacing:0px;">x 5</div>
<div class="t" style="left:979.5px;top:329.77px;font-size:11.5px;font-weight:700;color:#800080;font-family:'Liberation Sans';font-style:normal;letter-spacing:0px;">Form opacity</div>
<div class="r" style="left:958px;top:346px;width:115px;height:21px;background:#fff8d2;"></div>
<div class="r" style="left:964px;top:352px;width:103px;height:4px;background:#e7e7e7;border:1px solid #d6d6d6;"></div>
<svg width="10" height="13" style="left:1058px;top:348px"><path d="M0.5,0.5 H8 V9 L4.25,12 L0.5,9Z" fill="#0078d7"/></svg>
<svg width="1087" height="6" style="left:0px;top:362.5px"><line x1="968.5" y1="0" x2="968.5" y2="3.5" stroke="#8a8a8a" stroke-width="1"/><line x1="987.3" y1="0" x2="987.3" y2="3.5" stroke="#8a8a8a" stroke-width="1"/><line x1="1006.1" y1="0" x2="1006.1" y2="3.5" stroke="#8a8a8a" stroke-width="1"/><line x1="1024.9" y1="0" x2="1024.9" y2="3.5" stroke="#8a8a8a" stroke-width="1"/><line x1="1043.7" y1="0" x2="1043.7" y2="3.5" stroke="#8a8a8a" stroke-width="1"/><line x1="1062.5" y1="0" x2="1062.5" y2="3.5" stroke="#8a8a8a" stroke-width="1"/></svg>
<div class="t" style="left:765.6px;top:353.84px;font-size:12px;font-weight:700;color:#660033;font-family:'Liberation Sans';font-style:normal;letter-spacing:0px;">Scroll range x1.25</div>
<div class="r" style="left:876px;top:353px;width:13px;height:13px;background:#fff;border:1px solid #333;"></div>
<div class="t" style="left:750.2px;top:381.60px;font-size:13px;font-weight:400;color:#000;font-family:'Liberation Sans';font-style:normal;letter-spacing:0px;transform:scaleX(0.815);transform-origin:0 0;">RMS fit -0.1 ±0.9 km</div>
<div class="r" style="left:742px;top:402px;width:327px;height:240px;background:#fff;border:2px solid;border-color:#7a7a7a #e3e3e3 #e3e3e3 #7a7a7a;"></div>
<div class="r" style="left:749px;top:410px;width:66px;height:2px;background:#4b0082;"></div>
<div class="r" style="left:749px;top:422px;width:66px;height:2px;background:#ff0000;"></div>
<svg width="70" height="4" style="left:747px;top:433px"><circle cx="2.0" cy="2" r="1.3" fill="#ff69b4"/><circle cx="17.2" cy="2" r="1.3" fill="#ff69b4"/><circle cx="32.4" cy="2" r="1.3" fill="#ff69b4"/><circle cx="47.6" cy="2" r="1.3" fill="#ff69b4"/><circle cx="62.8" cy="2" r="1.3" fill="#ff69b4"/></svg>
<div style="position:absolute;left:743px;top:403px;width:325px;height:238px;overflow:hidden">
<div class="t" style="left:95px;top:3.02px;font-size:13.67px;font-family:'Liberation Mono';color:#1a1a1a">1    D Gault, near Hawkesbury</div>
<div class="t" style="left:95px;top:14.82px;font-size:13.67px;font-family:'Liberation Mono';color:#1a1a1a">2    P Nosworthy, near Hazelbrook</div>
<div class="t" style="left:95px;top:26.72px;font-size:13.67px;font-family:'Liberation Mono';color:#1a1a1a">3(P) Predicted</div>
</div>
<div class="r" style="left:628px;top:636px;width:450px;height:133px;background:#b0c4de;border:1px solid #8a9ab0;"></div>
<div class="t" style="left:631px;top:643.84px;font-size:12px;font-weight:700;color:#1f3a6a;font-family:'Liberation Sans';font-style:normal;letter-spacing:0px;">DAMIT</div>
<div class="r" style="left:675px;top:640px;width:14px;height:17px;background:#d0d0d0;border:1px solid #c0c0c0;"></div>
<div class="r" style="left:677px;top:642px;width:10px;height:13px;background:#00ff00;"></div>
<div class="t" style="left:682px;top:643.84px;font-size:12px;font-weight:700;color:#000;font-family:'Liberation Sans';font-style:normal;letter-spacing:0px;transform:translateX(-50%);">1</div>
<div class="r" style="left:693px;top:640px;width:14px;height:17px;background:#d0d0d0;border:1px solid #c0c0c0;"></div>
<div class="r" style="left:695px;top:642px;width:10px;height:13px;background:#66cdaa;"></div>
<div class="t" style="left:700px;top:643.84px;font-size:12px;font-weight:700;color:#000;font-family:'Liberation Sans';font-style:normal;letter-spacing:0px;transform:translateX(-50%);">2</div>
<div class="r" style="left:711px;top:640px;width:14px;height:17px;background:#d0d0d0;border:1px solid #c0c0c0;"></div>
<div class="r" style="left:713px;top:642px;width:10px;height:13px;background:#e8e8e8;"></div>
<div class="t" style="left:718px;top:643.84px;font-size:12px;font-weight:400;color:#a8a8a8;font-family:'Liberation Sans';font-style:normal;letter-spacing:0px;transform:translateX(-50%);">3</div>
<div class="r" style="left:729px;top:640px;width:14px;height:17px;background:#d0d0d0;border:1px solid #c0c0c0;"></div>
<div class="r" style="left:731px;top:642px;width:10px;height:13px;background:#e8e8e8;"></div>
<div class="t" style="left:736px;top:643.84px;font-size:12px;font-weight:400;color:#a8a8a8;font-family:'Liberation Sans';font-style:normal;letter-spacing:0px;transform:translateX(-50%);">4</div>
<div class="r" style="left:747px;top:640px;width:14px;height:17px;background:#d0d0d0;border:1px solid #c0c0c0;"></div>
<div class="r" style="left:749px;top:642px;width:10px;height:13px;background:#e8e8e8;"></div>
<div class="t" style="left:754px;top:643.84px;font-size:12px;font-weight:400;color:#a8a8a8;font-family:'Liberation Sans';font-style:normal;letter-spacing:0px;transform:translateX(-50%);">5</div>
<div class="r" style="left:765px;top:640px;width:14px;height:17px;background:#d0d0d0;border:1px solid #c0c0c0;"></div>
<div class="r" style="left:767px;top:642px;width:10px;height:13px;background:#e8e8e8;"></div>
<div class="t" style="left:772px;top:643.84px;font-size:12px;font-weight:400;color:#a8a8a8;font-family:'Liberation Sans';font-style:normal;letter-spacing:0px;transform:translateX(-50%);">6</div>
<div class="r" style="left:786px;top:640px;width:70px;height:17px;background:#b0e0e6;border:1px solid #c0c0c0;"></div>
<div class="t" style="left:791px;top:643.77px;font-size:11.5px;font-weight:400;color:#000;font-family:'Liberation Sans';font-style:normal;letter-spacing:0px;transform:scaleX(0.93);transform-origin:0 0;">Light curves</div>
<div class="t" style="left:862.5px;top:643.84px;font-size:12px;font-weight:700;color:#1f3a6a;font-family:'Liberation Sans';font-style:normal;letter-spacing:0px;">ISAM</div>
<div class="r" style="left:901px;top:640px;width:14px;height:17px;background:#e8e8e8;border:1px solid #c8c8c8;"></div>
<div class="t" style="left:908px;top:643.84px;font-size:12px;font-weight:400;color:#a8a8a8;font-family:'Liberation Sans';font-style:normal;letter-spacing:0px;transform:translateX(-50%);">1</div>
<div class="r" style="left:925px;top:640px;width:14px;height:17px;background:#e8e8e8;border:1px solid #c8c8c8;"></div>
<div class="t" style="left:932px;top:643.84px;font-size:12px;font-weight:400;color:#a8a8a8;font-family:'Liberation Sans';font-style:normal;letter-spacing:0px;transform:translateX(-50%);">2</div>
<div class="r" style="left:949px;top:640px;width:14px;height:17px;background:#e8e8e8;border:1px solid #c8c8c8;"></div>
<div class="t" style="left:956px;top:643.84px;font-size:12px;font-weight:400;color:#a8a8a8;font-family:'Liberation Sans';font-style:normal;letter-spacing:0px;transform:translateX(-50%);">3</div>
<div class="r" style="left:973px;top:640px;width:14px;height:17px;background:#e8e8e8;border:1px solid #c8c8c8;"></div>
<div class="t" style="left:980px;top:643.84px;font-size:12px;font-weight:400;color:#a8a8a8;font-family:'Liberation Sans';font-style:normal;letter-spacing:0px;transform:translateX(-50%);">4</div>
<div class="r" style="left:997px;top:640px;width:14px;height:17px;background:#e8e8e8;border:1px solid #c8c8c8;"></div>
<div class="t" style="left:1004px;top:643.84px;font-size:12px;font-weight:400;color:#a8a8a8;font-family:'Liberation Sans';font-style:normal;letter-spacing:0px;transform:translateX(-50%);">5</div>
<div class="r" style="left:1021px;top:640px;width:14px;height:17px;background:#e8e8e8;border:1px solid #c8c8c8;"></div>
<div class="t" style="left:1028px;top:643.84px;font-size:12px;font-weight:400;color:#a8a8a8;font-family:'Liberation Sans';font-style:normal;letter-spacing:0px;transform:translateX(-50%);">6</div>
<div class="r" style="left:1043px;top:640px;width:14px;height:17px;background:#2222cc;border:1px solid #c0c0c0;"></div>
<div class="t" style="left:1050px;top:643.34px;font-size:12px;font-weight:700;color:#ffff00;font-family:'Liberation Sans';font-style:normal;letter-spacing:0px;transform:translateX(-50%);">?</div>
<div class="r" style="left:1060px;top:640px;width:14px;height:17px;background:#dc143c;border:1px solid #c0c0c0;"></div>
<div class="t" style="left:1067px;top:643.34px;font-size:12px;font-weight:700;color:#fff;font-family:'Liberation Sans';font-style:normal;letter-spacing:0px;transform:translateX(-50%);">X</div>
<div class="t" style="left:636.5px;top:659.57px;font-size:11.5px;font-weight:400;color:#2b3f66;font-family:'Liberation Sans';font-style:normal;letter-spacing:0px;transform:scaleX(0.89);transform-origin:0 0;">Source</div>
<div class="t" style="left:695px;top:659.57px;font-size:11.5px;font-weight:400;color:#2b3f66;font-family:'Liberation Sans';font-style:normal;letter-spacing:0px;transform:scaleX(0.89);transform-origin:0 0;">ID</div>
<div class="t" style="left:729px;top:659.57px;font-size:11.5px;font-weight:400;color:#2b3f66;font-family:'Liberation Sans';font-style:normal;letter-spacing:0px;transform:scaleX(0.93);transform-origin:0 0;">Surf/Vol</div>
<div class="r" style="left:634px;top:674px;width:39px;height:18px;background:#fff;border:1px solid #a0a0a0;"></div>
<div class="t" style="left:636.5px;top:678.27px;font-size:11.5px;font-weight:400;color:#000;font-family:'Liberation Sans';font-style:normal;letter-spacing:0px;transform:scaleX(0.88);transform-origin:0 0;">DAMIT</div>
<div class="r" style="left:675px;top:674px;width:53px;height:18px;background:#f0f0f0;border:1px solid #a0a0a0;"></div>
<div class="t" style="left:678px;top:678.27px;font-size:11.5px;font-weight:400;color:#000;font-family:'Liberation Sans';font-style:normal;letter-spacing:0px;transform:scaleX(0.9);transform-origin:0 0;">1101</div>
<div class="r" style="left:730px;top:674px;width:38px;height:18px;background:#f0f0f0;border:1px solid #a0a0a0;"></div>
<div class="t" style="left:732px;top:678.27px;font-size:11.5px;font-weight:400;color:#000;font-family:'Liberation Sans';font-style:normal;letter-spacing:0px;transform:scaleX(0.9);transform-origin:0 0;">1.065</div>
<div class="r" style="left:631px;top:694px;width:34px;height:20px;background:#32cd32;border:1px solid #1a5a1a;"></div>
<div class="t" style="left:648px;top:697.84px;font-size:12px;font-weight:700;color:#000;font-family:'Liberation Sans';font-style:normal;letter-spacing:0px;transform:translateX(-50%);">Err</div>
<div class="t" style="left:668.5px;top:695.27px;font-size:11.5px;font-weight:400;color:#3a4f80;font-family:'Liberation Sans';font-style:italic;letter-spacing:0px;transform:scaleX(0.89);transform-origin:0 0;">Values in memory =></div>
<div class="r" style="left:770px;top:660px;width:300px;height:49px;background:#fff8d2;border-left:1px solid #fff;border-top:1px solid #fff;"></div>
<div class="t" style="left:793px;top:661.27px;font-size:11.5px;font-weight:400;color:#000;font-family:'Liberation Sans';font-style:normal;letter-spacing:0px;transform:scaleX(0.88);transform-origin:0 0;">Fit quality</div>
<div class="r" style="left:772px;top:674px;width:97px;height:21px;background:#fff;border:1px solid #7a7a7a;"></div>
<div class="t" style="left:775px;top:679.27px;font-size:11.5px;font-weight:400;color:#000;font-family:'Liberation Sans';font-style:normal;letter-spacing:0px;transform:scaleX(0.92);transform-origin:0 0;">Minimum dia</div>
<svg width="12" height="8" style="left:853px;top:681px"><path d="M1,1.5 L6,6.5 L11,1.5" fill="none" stroke="#333" stroke-width="1.2"/></svg>
<div class="t" style="left:774.5px;top:695.27px;font-size:11.5px;font-weight:400;color:#800080;font-family:'Liberation Sans';font-style:normal;letter-spacing:0px;transform:scaleX(0.92);transform-origin:0 0;">Minimum dia</div>
<div class="t" style="left:871px;top:661.27px;font-size:11.5px;font-weight:400;color:#000;font-family:'Liberation Sans';font-style:normal;letter-spacing:0px;transform:scaleX(0.97);transform-origin:0 0;">Ph Corr</div>
<div class="r" style="left:873px;top:674px;width:39px;height:19px;background:#f0f0f0;border:1px solid #a0a0a0;"></div>
<div class="t" style="left:876px;top:678.27px;font-size:11.5px;font-weight:400;color:#000;font-family:'Liberation Sans';font-style:normal;letter-spacing:0px;">0°</div>
<div class="t" style="left:873px;top:695.27px;font-size:11.5px;font-weight:400;color:#800080;font-family:'Liberation Sans';font-style:normal;letter-spacing:0px;">0°</div>
<div class="t" style="left:922px;top:661.27px;font-size:11.5px;font-weight:400;color:#000;font-family:'Liberation Sans';font-style:normal;letter-spacing:0px;transform:scaleX(0.88);transform-origin:0 0;">Minimum dia</div>
<div class="r" style="left:919px;top:674px;width:39px;height:19px;background:#f0f0f0;border:1px solid #a0a0a0;"></div>
<div class="t" style="left:921.5px;top:678.27px;font-size:11.5px;font-weight:400;color:#000;font-family:'Liberation Sans';font-style:normal;letter-spacing:0px;">64</div>
<div class="t" style="left:922px;top:695.27px;font-size:11.5px;font-weight:400;color:#4b3f8a;font-family:'Liberation Sans';font-style:normal;letter-spacing:0px;">64</div>
<div class="r" style="left:959px;top:674px;width:31px;height:23px;background:#adff2f;border:2px solid #c8c8c8;"></div>
<div class="t" style="left:974.5px;top:680.27px;font-size:11.5px;font-weight:400;color:#000;font-family:'Liberation Sans';font-style:normal;letter-spacing:0px;transform:translateX(-50%);">Set</div>
<div class="t" style="left:998px;top:662.27px;font-size:11.5px;font-weight:400;color:#000;font-family:'Liberation Sans';font-style:normal;letter-spacing:0px;transform:scaleX(0.88);transform-origin:0 0;">Maximum dia</div>
<div class="r" style="left:997px;top:674px;width:38px;height:19px;background:#ffc0cb;border:1px solid #808080;"></div>
<div class="r" style="left:1037px;top:674px;width:30px;height:23px;background:#adff2f;border:2px solid #c8c8c8;"></div>
<div class="t" style="left:1052px;top:680.27px;font-size:11.5px;font-weight:400;color:#000;font-family:'Liberation Sans';font-style:normal;letter-spacing:0px;transform:translateX(-50%);">Set</div>
<div class="t" style="left:1000px;top:693.27px;font-size:11.5px;font-weight:400;color:#3a3a8a;font-family:'Liberation Sans';font-style:normal;letter-spacing:0px;">- - - -</div>
<div class="t" style="left:636px;top:715.77px;font-size:11.5px;font-weight:400;color:#2b3f66;font-family:'Liberation Sans';font-style:normal;letter-spacing:0px;transform:scaleX(0.905);transform-origin:0 0;">Version info</div>
<div class="r" style="left:696px;top:714px;width:270px;height:18px;background:#f0f0f0;border:1px solid #808080;"></div>
<div class="t" style="left:699px;top:718.27px;font-size:11.5px;font-weight:400;color:#000;font-family:'Liberation Sans';font-style:normal;letter-spacing:0px;transform:scaleX(0.91);transform-origin:0 0;">2016-01-04</div>
<div class="t" style="left:635px;top:740.77px;font-size:11.5px;font-weight:400;color:#2b3f66;font-family:'Liberation Sans';font-style:normal;letter-spacing:0px;transform:scaleX(0.905);transform-origin:0 0;">Image scale</div>
<div class="r" style="left:697px;top:738px;width:269px;height:22px;background:#fff8d2;"></div>
<svg width="269" height="6" style="left:697px;top:741px"><line x1="6.0" y1="0" x2="6.0" y2="4" stroke="#999"/><line x1="14.1" y1="0" x2="14.1" y2="4" stroke="#999"/><line x1="22.2" y1="0" x2="22.2" y2="4" stroke="#999"/><line x1="30.3" y1="0" x2="30.3" y2="4" stroke="#999"/><line x1="38.4" y1="0" x2="38.4" y2="4" stroke="#999"/><line x1="46.5" y1="0" x2="46.5" y2="4" stroke="#999"/><line x1="54.6" y1="0" x2="54.6" y2="4" stroke="#999"/><line x1="62.7" y1="0" x2="62.7" y2="4" stroke="#999"/><line x1="70.8" y1="0" x2="70.8" y2="4" stroke="#999"/><line x1="78.9" y1="0" x2="78.9" y2="4" stroke="#999"/><line x1="87.0" y1="0" x2="87.0" y2="4" stroke="#999"/><line x1="95.1" y1="0" x2="95.1" y2="4" stroke="#999"/><line x1="103.2" y1="0" x2="103.2" y2="4" stroke="#999"/><line x1="111.3" y1="0" x2="111.3" y2="4" stroke="#999"/><line x1="119.4" y1="0" x2="119.4" y2="4" stroke="#999"/><line x1="127.5" y1="0" x2="127.5" y2="4" stroke="#999"/><line x1="135.6" y1="0" x2="135.6" y2="4" stroke="#999"/><line x1="143.7" y1="0" x2="143.7" y2="4" stroke="#999"/><line x1="151.8" y1="0" x2="151.8" y2="4" stroke="#999"/><line x1="159.9" y1="0" x2="159.9" y2="4" stroke="#999"/><line x1="168.0" y1="0" x2="168.0" y2="4" stroke="#999"/><line x1="176.1" y1="0" x2="176.1" y2="4" stroke="#999"/><line x1="184.2" y1="0" x2="184.2" y2="4" stroke="#999"/><line x1="192.3" y1="0" x2="192.3" y2="4" stroke="#999"/><line x1="200.4" y1="0" x2="200.4" y2="4" stroke="#999"/><line x1="208.5" y1="0" x2="208.5" y2="4" stroke="#999"/><line x1="216.6" y1="0" x2="216.6" y2="4" stroke="#999"/><line x1="224.7" y1="0" x2="224.7" y2="4" stroke="#999"/><line x1="232.8" y1="0" x2="232.8" y2="4" stroke="#999"/><line x1="240.9" y1="0" x2="240.9" y2="4" stroke="#999"/><line x1="249.0" y1="0" x2="249.0" y2="4" stroke="#999"/><line x1="257.1" y1="0" x2="257.1" y2="4" stroke="#999"/><line x1="265.2" y1="0" x2="265.2" y2="4" stroke="#999"/></svg>
<div class="r" style="left:702px;top:752px;width:258px;height:4px;background:#e7e7e7;border:1px solid #d6d6d6;"></div>
<svg width="10" height="13" style="left:859px;top:749px"><path d="M0.5,3 L4.5,0.5 L8.5,3 V12 H0.5Z" fill="#0078d7"/></svg>
<div class="r" style="left:976px;top:717px;width:97px;height:47px;background:#ffc0cb;border:2px solid #c8c8c8;"></div>
<div class="t" style="left:1024.5px;top:726.42px;font-size:12.5px;font-weight:700;color:#8b0a2a;font-family:'Liberation Sans';font-style:normal;letter-spacing:0px;transform:translateX(-50%);">Save/update</div>
<div class="t" style="left:1024.5px;top:739.92px;font-size:12.5px;font-weight:700;color:#8b0a2a;font-family:'Liberation Sans';font-style:normal;letter-spacing:0px;transform:translateX(-50%);">model 1101</div>
</body></html>
